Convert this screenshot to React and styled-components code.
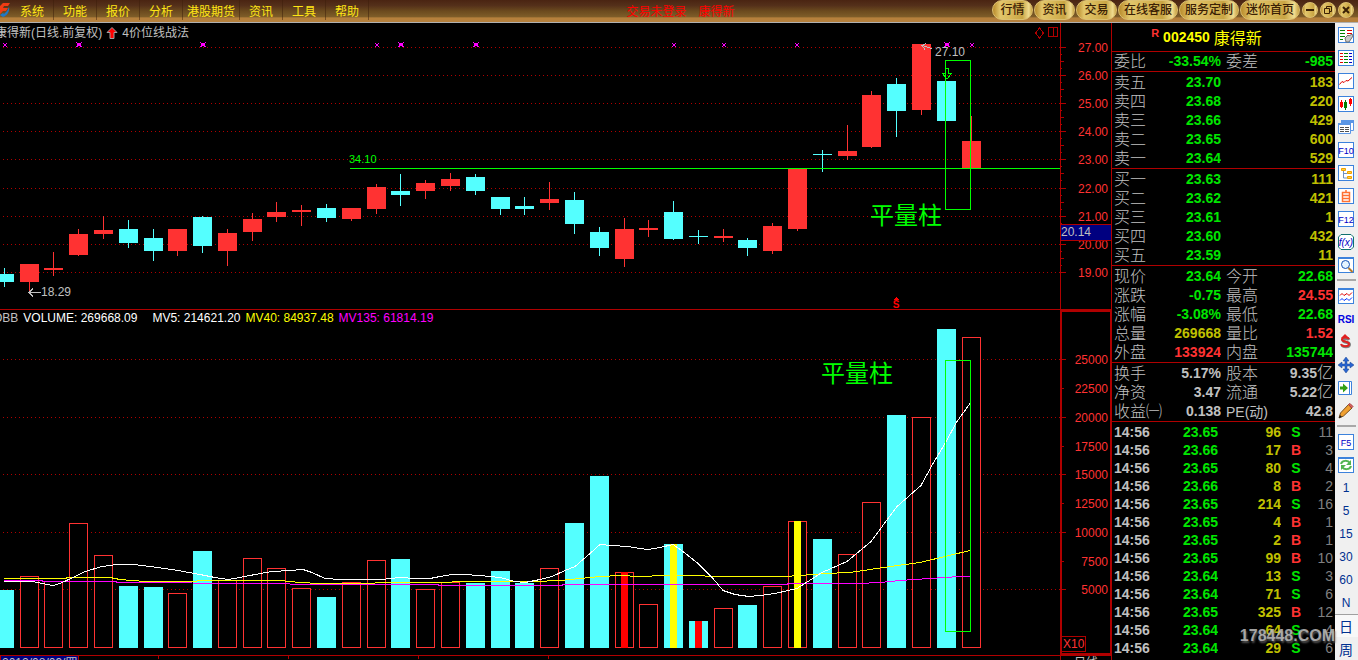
import React from 'react'
import styled, { createGlobalStyle, css } from 'styled-components'

const colors = {
  red: '#ff3232',
  line: '#b00000',
  cyan: '#54ffff',
  green: '#00e600',
  lime: '#00ff00',
  olive: '#c0c000',
  yellow: '#ffff00',
  magenta: '#ff00ff',
  grey: '#c0c0c0',
  dim: '#808080',
  navy: '#000080',
  ink: '#003090',
}

const fontStack = '"Liberation Sans", "Noto Sans CJK SC", sans-serif'

const GlobalStyle = createGlobalStyle`
  * {
    box-sizing: border-box;
  }

  body {
    background: #000;
    font-family: ${fontStack};
    font-size: 12px;
    margin: 0;
  }

  button {
    background: none;
    border: 0;
    cursor: pointer;
    font-family: inherit;
    margin: 0;
    padding: 0;
  }

  svg {
    display: block;
  }
`

/* ---------- data ---------- */

// dir, body top, body bottom, wick top, wick bottom, volume top, stripe
const bars = [
  ['down', 274, 282, 268, 287, 590],
  ['up', 264, 282, 264, 291, 576],
  ['up', 268, 270, 252, 276, 581],
  ['up', 234, 255, 229, 256, 523],
  ['up', 230, 234, 216, 239, 555],
  ['down', 229, 243, 220, 248, 586],
  ['down', 238, 251, 229, 261, 587],
  ['up', 229, 251, 229, 256, 593],
  ['down', 217, 246, 216, 253, 551],
  ['up', 233, 251, 229, 266, 580],
  ['up', 219, 232, 213, 241, 558],
  ['up', 212, 217, 202, 222, 568],
  ['up', 210, 212, 205, 226, 588],
  ['down', 208, 218, 204, 222, 597],
  ['up', 208, 219, 208, 221, 582],
  ['up', 187, 209, 184, 214, 560],
  ['down', 191, 195, 174, 206, 559],
  ['up', 183, 191, 180, 199, 589],
  ['up', 179, 186, 173, 191, 582],
  ['down', 177, 191, 174, 195, 583],
  ['down', 197, 209, 197, 215, 571],
  ['down', 206, 209, 197, 215, 583],
  ['up', 199, 203, 182, 210, 568],
  ['down', 200, 224, 192, 234, 523],
  ['down', 232, 248, 227, 256, 476],
  ['up', 229, 259, 218, 267, 572, '#ff0000'],
  ['up', 228, 230, 220, 237, 604],
  ['down', 212, 239, 201, 240, 544, '#ffff00'],
  ['down', 236, 237, 230, 244, 621, '#ff0000'],
  ['up', 236, 238, 229, 242, 608],
  ['down', 240, 248, 238, 256, 605],
  ['up', 226, 251, 223, 254, 586],
  ['up', 169, 229, 168, 231, 521, '#ffff00'],
  ['down', 154, 155, 150, 172, 539],
  ['up', 151, 156, 125, 160, 554],
  ['up', 95, 147, 91, 148, 502],
  ['down', 84, 111, 78, 137, 415],
  ['up', 44, 110, 44, 115, 417],
  ['down', 81, 121, 81, 121, 329],
  ['up', 141, 168, 116, 168, 337],
].map(([dir, top, bottom, high, low, volume, stripe], i) => ({
  x: Math.floor(24.79 * i - 4.7),
  dir,
  top,
  bottom,
  high,
  low,
  volume,
  stripe,
}))

const BAR = 19
const PRICE_TOP = 23
const PRICE_HEIGHT = 287
const VOLUME_TOP = 310
const VOLUME_HEIGHT = 345
const VOLUME_BASE = 648

const priceTicks = [
  ['27.00', 47],
  ['26.00', 75],
  ['25.00', 103],
  ['24.00', 131],
  ['23.00', 159],
  ['22.00', 188],
  ['21.00', 216],
  ['20.00', 244],
  ['19.00', 272],
]

const volumeTicks = [
  ['25000', 359],
  ['22500', 388],
  ['20000', 417],
  ['17500', 446],
  ['15000', 474],
  ['12500', 503],
  ['10000', 532],
  ['7500', 561],
  ['5000', 589],
]

const signals = [
  [5, 45],
  [79, 45, true],
  [203, 45, true],
  [377, 45],
  [401, 45, true],
  [476, 45, true],
  [674, 45],
  [724, 45],
  [797, 45],
  [947, 45, true],
  [972, 45],
]

const mv5 =
  '4,581 33,581 42,583 53,585 60,583 73,577 85,571 102,566 117,564 134,564 150,566 165,568 178,570 200,574 215,577 228,579 240,577 255,574 272,571 290,570 303,569 312,572 325,578 340,579 381,579 400,577 415,578 430,578 440,576 452,574 463,574 480,575 500,577 515,581 525,582 540,579 552,576 565,570 575,566 590,553 600,544 612,545 628,546 640,548 648,549 660,547 673,544 683,551 698,563 713,578 723,590 735,594 749,596 760,595 775,593 797,588 808,581 822,572 847,561 871,541 897,506 921,485 933,463 945,443 957,421 970,403'
const mv40 =
  '4,578 65,578 68,577 110,577 120,579 145,581 190,581 205,580 280,580 300,582 320,583 365,583 385,582 440,582 465,581 535,581 560,580 580,578 600,576 620,575 640,576 665,575 700,575 710,576 785,576 800,575 825,573 850,572 870,569 890,566 920,562 945,556 970,550'
const mv135 =
  '4,580 40,580 45,581 115,581 118,582 265,583 315,584 437,584 440,585 560,585 565,584 785,584 790,583 858,583 880,582 900,580 930,578 960,576 970,576'

const menus = ['系统', '功能', '报价', '分析', '港股期货', '资讯', '工具', '帮助']
const shortcuts = ['行情', '资讯', '交易', '在线客服', '服务定制', '迷你首页']

const asks = [
  ['卖五', '23.70', '183'],
  ['卖四', '23.68', '220'],
  ['卖三', '23.66', '429'],
  ['卖二', '23.65', '600'],
  ['卖一', '23.64', '529'],
]

const bids = [
  ['买一', '23.63', '111'],
  ['买二', '23.62', '421'],
  ['买三', '23.61', '1'],
  ['买四', '23.60', '432'],
  ['买五', '23.59', '11'],
]

const commission = [['委比', '-33.54%', 'green', '委差', '-985', 'green']]

const quotes = [
  ['现价', '23.64', 'green', '今开', '22.68', 'green'],
  ['涨跌', '-0.75', 'green', '最高', '24.55', 'red'],
  ['涨幅', '-3.08%', 'green', '最低', '22.68', 'green'],
  ['总量', '269668', 'olive', '量比', '1.52', 'red'],
  ['外盘', '133924', 'red', '内盘', '135744', 'green'],
]

const finance = [
  ['换手', '5.17%', 'grey', '股本', '9.35亿', 'grey'],
  ['净资', '3.47', 'grey', '流通', '5.22亿', 'grey'],
  ['收益㈠', '0.138', 'grey', 'PE(动)', '42.8', 'grey'],
]

const trades = [
  ['23.65', 96, 'S', 11],
  ['23.66', 17, 'B', 3],
  ['23.65', 80, 'S', 4],
  ['23.66', 8, 'B', 2],
  ['23.65', 214, 'S', 16],
  ['23.65', 4, 'B', 1],
  ['23.65', 2, 'B', 1],
  ['23.65', 99, 'B', 10],
  ['23.64', 13, 'S', 3],
  ['23.64', 71, 'S', 6],
  ['23.65', 325, 'B', 12],
  ['23.64', 64, 'S', 4],
  ['23.64', 29, 'S', 6],
]

const periods = ['1', '5', '15', '30', '60', 'N', '日', '周']

/* ---------- shell ---------- */

const Page = styled.div`
  display: flex;
  flex-direction: column;
  height: 100vh;
  overflow: hidden;
`

const Workspace = styled.main`
  display: flex;
  flex: 1;
  min-height: 0;
`

/* ---------- top bar ---------- */

const TopBar = styled.header`
  align-items: center;
  background: linear-gradient(#4a2412 0%, #54301a 25%, #6b4a1e 50%, #7d5c28 75%, #b5803c 82%, #b5803c 100%);
  border-bottom: 1px solid #b0b0b0;
  display: flex;
  flex: none;
  height: 23px;
  justify-content: space-between;
  padding: 0 4px 2px 0;
`

const MenuNav = styled.nav`
  align-items: center;
  display: flex;
  height: 20px;
`

const Logo = styled.svg`
  height: 14px;
  margin-right: 1px;
  width: 10px;
`

const MenuButton = styled.button`
  border-right: 1px solid rgba(60, 30, 10, 0.5);
  color: #ffe614;
  font-size: 12px;
  height: 20px;
  width: ${props => (props.$wide ? 57 : 43)}px;
`

const Account = styled.div`
  color: #ff0000;
  display: flex;
  gap: 12px;
`

const Shortcuts = styled.div`
  align-items: center;
  display: flex;
  gap: 1px;
`

const gold = css`
  background: linear-gradient(90deg, #b88a2a 0%, #e2c66c 18%, #d9b95a 45%, #c9a544 75%, #f0dc90 92%, #c79f40 100%);
  border: 1px solid #dcc070;
`

const Pill = styled.button`
  ${gold}
  border-radius: 10px;
  color: #3a2004;
  font-size: 12px;
  font-weight: 500;
  height: 20px;
  line-height: 18px;
  width: ${props => (props.$wide ? 60 : 41)}px;
`

const RoundButton = styled.button`
  ${gold}
  align-items: center;
  border-radius: 50%;
  display: flex;
  height: 16px;
  justify-content: center;
  margin-left: 1px;
  width: 16px;
`

/* ---------- charts ---------- */

const Charts = styled.section`
  display: grid;
  flex: 1;
  grid-template-columns: minmax(0, 1fr) 52px;
  grid-template-rows: auto auto 1fr;
  min-width: 0;
`

const Pane = styled.div`
  overflow: hidden;
  position: relative;
`

const Legend = styled.div`
  align-items: center;
  color: ${colors.grey};
  display: flex;
  gap: ${props => props.$gap}px;
  left: ${props => props.$left}px;
  line-height: 16px;
  position: absolute;
  top: ${props => props.$top}px;
  white-space: nowrap;
`

const LegendItem = styled.span`
  color: ${props => props.$color};
  margin-right: ${props => (props.$spaced ? 10 : 0)}px;
`

const Drawing = styled.svg`
  font-family: ${fontStack};
  font-size: 12px;
  width: 100%;
`

const TimeAxis = styled.div`
  border-top: 1px solid ${colors.line};
  display: flex;
  height: 16px;
`

const DateLabel = styled.span`
  background: ${colors.navy};
  border: solid ${colors.line};
  border-width: 0 1px;
  color: ${colors.grey};
  line-height: 14px;
  padding: 0 1px;
`

const TimeTick = styled.span`
  border-left: 1px solid ${colors.line};
  height: 3px;
  margin-left: ${props => props.$gap}px;
`

const PeriodLabel = styled.div`
  border: solid ${colors.line};
  border-width: 1px 1px 0;
  color: ${colors.grey};
  line-height: 15px;
  text-align: center;
`

const Grid = ({ ticks }) => (
  <g stroke={colors.line} strokeDasharray="1 3">
    {ticks.map(([label, y]) => (
      <line key={label} x1="3" x2="100%" y1={y + 0.5} y2={y + 0.5} />
    ))}
  </g>
)

const Candle = ({ bar }) => (
  <g fill={bar.dir === 'up' ? colors.red : colors.cyan}>
    <rect x={bar.x + 9} y={bar.high} width="1" height={bar.low - bar.high} />
    <rect x={bar.x} y={bar.top} width={BAR} height={bar.bottom - bar.top} />
  </g>
)

const VolumeBar = ({ bar }) => (
  <g>
    {bar.dir === 'up' ? (
      <rect
        x={bar.x + 0.5}
        y={bar.volume + 0.5}
        width={BAR - 1}
        height={VOLUME_BASE - bar.volume - 1}
        fill="#000"
        stroke={colors.red}
      />
    ) : (
      <rect x={bar.x} y={bar.volume} width={BAR} height={VOLUME_BASE - bar.volume} fill={colors.cyan} />
    )}
    {bar.stripe && (
      <rect x={bar.x + 6} y={bar.volume} width="7" height={VOLUME_BASE - bar.volume} fill={bar.stripe} />
    )}
  </g>
)

const Signal = ({ x, y, strong }) => (
  <g fill={colors.magenta}>
    <path
      d={`M${x - 2} ${y - 2}h1v1h-1zM${x + 1} ${y - 2}h1v1h-1zM${x - 1} ${y - 1}h2v2h-2zM${x - 2} ${y + 1}h1v1h-1zM${x + 1} ${y + 1}h1v1h-1z`}
    />
    {strong && <path d={`M${x - 2} ${y - 2}h4v3h-4zM${x - 3} ${y - 3}h1v1h-1zM${x + 2} ${y - 3}h1v1h-1zM${x - 3} ${y + 1}h1v1h-1zM${x + 2} ${y + 1}h1v1h-1z`} />}
  </g>
)

const PriceChart = () => (
  <Drawing height={PRICE_HEIGHT} shapeRendering="crispEdges">
    <g transform={`translate(0 ${-PRICE_TOP})`}>
      <Grid ticks={priceTicks} />
      {bars.map(bar => (
        <Candle key={bar.x} bar={bar} />
      ))}
      {signals.map(([x, y, strong]) => (
        <Signal key={x} x={x} y={y} strong={strong} />
      ))}

      <line x1="350" x2="100%" y1="168.5" y2="168.5" stroke={colors.lime} />
      <text x="349" y="163" fill={colors.lime} fontSize="11">
        34.10
      </text>
      <rect x="945.5" y="60.5" width="25" height="149" fill="none" stroke={colors.lime} />
      <path d="M945.5 68.5h3v5h3l-4.500 5.500l-4.500-5.500h3z" fill="none" stroke={colors.lime} />
      <text x="870" y="224" fill={colors.lime} fontSize="24">
        平量柱
      </text>

      <g stroke={colors.grey} fill="none">
        <path d="M932 48.500L922 45.500M926 43.500L922 45.500L925 49.500" />
        <path d="M29 292.500h12M33 288.500l-4 4l4 4" />
      </g>
      <text x="935" y="56" fill={colors.grey}>
        27.10
      </text>
      <text x="41" y="296" fill={colors.grey}>
        18.29
      </text>

      <path d="M896 297l3 3h-6z" fill="#ff0000" />
      <text x="896" y="308" fill="#ff0000" fontSize="10" fontWeight="700" textAnchor="middle">
        S
      </text>
      <path
        d="M1039.500 28l4 5l-4 5l-4-5zM1048.500 27.500h9v9h-9zM1053.500 27.500v9"
        fill="none"
        stroke={colors.line}
      />
      <rect x="0" y="309" width="100%" height="1" fill={colors.line} />
    </g>
  </Drawing>
)

const PriceAxis = () => (
  <Drawing height={PRICE_HEIGHT} shapeRendering="crispEdges">
    <g transform={`translate(0 ${-PRICE_TOP})`}>
      <path d="M0.500 23V310M51.500 23V310M0 309.500H52" stroke={colors.line} />
      {priceTicks.map(([label, y], i) => (
        <g key={label}>
          <path
            d={`M1 ${y + 0.5}h5${i < 8 ? `M1 ${y + 14.5}h3M1 ${y + 7.5}h1M1 ${y + 21.5}h1` : ''}`}
            stroke={colors.line}
          />
          <text x="48" y={y + 5} fill={colors.red} textAnchor="end">
            {label}
          </text>
        </g>
      ))}
      <rect x="0.5" y="224.5" width="51" height="16" fill={colors.navy} stroke={colors.line} />
      <text x="1" y="236" fill={colors.grey}>
        20.14
      </text>
    </g>
  </Drawing>
)

const VolumeChart = () => (
  <Drawing height={VOLUME_HEIGHT} shapeRendering="crispEdges">
    <g transform={`translate(0 ${-VOLUME_TOP})`}>
      <Grid ticks={volumeTicks.filter((tick, i) => i % 2 === 0)} />
      {bars.map(bar => (
        <VolumeBar key={bar.x} bar={bar} />
      ))}
      <g fill="none" transform="translate(0 0.5)">
        <polyline points={mv40} stroke={colors.yellow} />
        <polyline points={mv135} stroke={colors.magenta} />
        <polyline points={mv5} stroke="#fff" />
      </g>
      <rect x="945.5" y="360.5" width="25" height="271" fill="none" stroke={colors.lime} />
      <text x="821" y="382" fill={colors.lime} fontSize="24">
        平量柱
      </text>
    </g>
  </Drawing>
)

const VolumeAxis = () => (
  <Drawing height={VOLUME_HEIGHT} shapeRendering="crispEdges">
    <g transform={`translate(0 ${-VOLUME_TOP})`}>
      <rect x="1" y="311" width="50" height="343" fill="none" stroke={colors.line} strokeWidth="2" />
      {volumeTicks.map(([label, y], i) => (
        <g key={label}>
          <path d={`M1 ${y + 0.5}h${i % 2 ? 3 : 5}`} stroke={colors.line} />
          <text x="48" y={y + 5} fill={colors.red} textAnchor="end">
            {label}
          </text>
        </g>
      ))}
      <rect x="1.5" y="636.5" width="24" height="15" fill="none" stroke={colors.line} />
      <text x="3" y="648" fill={colors.red}>
        X10
      </text>
    </g>
  </Drawing>
)

/* ---------- quote panel ---------- */

const Panel = styled.aside`
  background: #000;
  color: ${colors.grey};
  flex: none;
  position: relative;
  width: 223px;
`

const Section = styled.div`
  border-bottom: 1px solid ${colors.line};
  padding: ${props => (props.$tight ? 0 : 1)}px 2px 0;
`

const StockTitle = styled.h1`
  align-items: center;
  border-bottom: 1px solid ${colors.line};
  color: ${colors.yellow};
  display: flex;
  font-size: 14px;
  gap: 4px;
  height: 29px;
  justify-content: center;
  margin: 0;
  padding-right: 34px;
`

const StockName = styled.span`
  font-size: 16px;
  font-weight: 400;
`

const MarginFlag = styled.sup`
  align-self: flex-start;
  color: ${colors.red};
  font-size: 11px;
  line-height: 20px;
`

const Table = styled.table`
  border-collapse: collapse;
  table-layout: fixed;
  width: 100%;

  th,
  td {
    height: ${props => props.$row}px;
    line-height: ${props => props.$row}px;
    overflow: hidden;
    padding: 0;
    white-space: nowrap;
  }
`

const Label = styled.th`
  font-size: 16px;
  font-weight: 300;
  padding-left: ${props => (props.$second ? 5 : 0)}px !important;
  text-align: left;
  width: ${props => (props.$second ? 53 : 48)}px;
`

const Value = styled.td`
  color: ${props => colors[props.$tone]};
  font-size: 14px;
  font-weight: ${props => (props.$light ? 400 : 700)};
  text-align: ${props => props.$align || 'right'};
  width: ${props => (props.$width ? props.$width + 'px' : 'auto')};
`

const Unit = styled.span`
  font-size: 16px;
  font-weight: 300;
  line-height: 1;
`

const Latin = styled.span`
  font-size: 14px;
  font-weight: 400;
  line-height: 1;
`

const TradeList = styled.div`
  padding: 1px 2px 0;
`

const Watermark = styled.div`
  bottom: 12px;
  color: rgba(190, 190, 190, 0.85);
  font-family: 'Liberation Sans Narrow', 'Liberation Sans', sans-serif;
  font-size: 16px;
  font-weight: 700;
  line-height: 24px;
  position: absolute;
  right: 0;
  text-shadow: 1px 2px 2px #555;
`

const OrderRows = ({ rows }) => (
  <Table $row={19}>
    <tbody>
      {rows.map(([label, price, amount]) => (
        <tr key={label}>
          <Label scope="row">{label}</Label>
          <Value $tone="green" $width={59}>
            {price}
          </Value>
          <Value $tone="olive">{amount}</Value>
        </tr>
      ))}
    </tbody>
  </Table>
)

const PairRows = ({ rows }) => (
  <Table $row={19}>
    <tbody>
      {rows.map(([label, value, tone, label2, value2, tone2]) => (
        <tr key={label}>
          <Label scope="row">{label}</Label>
          <Value $tone={tone} $width={59}>
            {value}
          </Value>
          <Label scope="row" $second>
            {label2.startsWith('PE') ? <Latin>{label2}</Latin> : label2}
          </Label>
          <Value $tone={tone2}>
            {value2.replace('亿', '')}
            {value2.endsWith('亿') && <Unit>亿</Unit>}
          </Value>
        </tr>
      ))}
    </tbody>
  </Table>
)

const QuotePanel = () => (
  <Panel>
    <StockTitle>
      <MarginFlag>R</MarginFlag>
      002450
      <StockName>康得新</StockName>
    </StockTitle>
    <Section $tight>
      <PairRows rows={commission} />
    </Section>
    <Section>
      <OrderRows rows={asks} />
    </Section>
    <Section>
      <OrderRows rows={bids} />
    </Section>
    <Section>
      <PairRows rows={quotes} />
    </Section>
    <Section>
      <PairRows rows={finance} />
    </Section>
    <TradeList>
      <Table $row={18}>
        <tbody>
          {trades.map(([price, amount, side, count], i) => (
            <tr key={i}>
              <Value $tone="grey" $align="left" $width={48}>
                14:56
              </Value>
              <Value $tone="green" $width={56}>
                {price}
              </Value>
              <Value $tone="olive" $width={63}>
                {amount}
              </Value>
              <Value $tone={side === 'S' ? 'green' : 'red'} $align="center" $width={30}>
                {side}
              </Value>
              <Value $tone="dim" $light>
                {count}
              </Value>
            </tr>
          ))}
        </tbody>
      </Table>
    </TradeList>
    <Watermark>178448.COM</Watermark>
  </Panel>
)

/* ---------- tool rail ---------- */

const Rail = styled.nav`
  background: #f0f0f0;
  display: flex;
  flex: none;
  flex-direction: column;
  width: 23px;
`

const RailButton = styled.button`
  align-items: center;
  background: ${props => (props.$active ? '#f8f8f8' : 'none')};
  border-top: ${props => (props.$active ? '1px solid #a0a0a0' : '0')};
  color: ${colors.ink};
  display: flex;
  flex: none;
  font-size: ${props => (props.$cjk ? 14 : 12)}px;
  height: 23px;
  justify-content: center;
  padding-right: 1px;
`

const Divider = styled.hr`
  border: 0;
  border-top: 2px solid #a8a8a8;
  flex: none;
  margin: 3px 2px;
  width: 19px;
`

const IconSvg = styled.svg`
  font-family: ${fontStack};
  height: 16px;
  overflow: visible;
  width: 16px;
`

const Frame = ({ stroke = '#3c82dc' }) => (
  <rect x="0.5" y="0.5" width="15" height="15" fill="#fff" stroke={stroke} />
)

const FrameText = ({ children }) => (
  <>
    <Frame />
    <text x="8" y="12" fill="#0000c8" fontSize="9" textAnchor="middle">
      {children}
    </text>
  </>
)

const icons = [
  [
    '报价列表',
    <>
      <Frame />
      <path d="M2 3.500h5M2 6.500h5M2 9.500h5M2 12.500h3" stroke="#008000" />
      <path d="M9 3.500h5M9 6.500h5" stroke="#e00000" />
      <path d="M7 11l3-3l1 1l3-2l1 2l-4 6h-3z" fill="#c8c8c8" stroke="#707070" />
    </>,
  ],
  [
    '分类报价',
    <>
      <Frame />
      <path d="M2 3.500h3M2 6.500h3M2 9.500h3M2 12.500h3" stroke="#e00000" />
      <path d="M6 3.500h4M6 6.500h4M6 9.500h4M6 12.500h4" stroke="#008000" />
      <path d="M11 3.500h3M11 6.500h3M11 9.500h3M11 12.500h3" stroke="#0000c8" />
    </>,
  ],
  [
    '分时走势',
    <>
      <Frame />
      <path d="M1.500 11.500L4 8.500L6 9.500L8 7.500L10 8L14 4.500" fill="none" stroke="#e00000" />
    </>,
  ],
  [
    '技术分析',
    <>
      <Frame />
      <path d="M3.500 4v8M12.500 2v8" stroke="#ff0000" />
      <path d="M7.500 4v10" stroke="#008000" />
      <path d="M2 6h3v5h-3zM11 3h3v5h-3z" fill="#ff0000" />
      <path d="M6 6h3v6h-3z" fill="#008000" />
    </>,
  ],
  [
    '多窗口',
    <>
      <path d="M3.500 1.500h12v10h-12z" fill="#fff" stroke="#5a96e6" />
      <path d="M3 1h13v3h-13z" fill="#5a96e6" />
      <path d="M0.500 4.500h12v10h-12z" fill="#fff" stroke="#5a96e6" />
      <path d="M0 4h13v2h-13z" fill="#5a96e6" />
      <path d="M2 8.500h4M7 8.500h4M2 10.500h4M7 10.500h4M2 12.500h4M7 12.500h4" stroke="#505050" />
    </>,
  ],
  ['基本资料', <FrameText>F10</FrameText>],
  [
    '板块树',
    <>
      <Frame />
      <path d="M5.500 6v7h4M5.500 8.500h4" fill="none" stroke="#7090c0" />
      <path d="M3.500 3.500h4v2h-4zM9.500 6.500h4v2h-4zM9.500 11.500h4v2h-4z" fill="#ffd040" stroke="#f0a000" />
    </>,
  ],
  [
    '自选股',
    <>
      <Frame />
      <path d="M4.500 4.500h7v9h-7zM4.500 7.500h7M4.500 10.500h7M8 2v2" fill="none" stroke="#ff7032" strokeWidth="1.500" />
    </>,
  ],
  ['交易委托', <FrameText>F12</FrameText>],
  [
    '公式',
    <>
      <path d="M3 0.500h10l2.500 2.500v10l-2.500 2.500h-10l-2.500-2.500v-10z" fill="#fff" stroke="#107070" />
      <text x="8" y="12" fill="#0000c8" fontSize="10" fontStyle="italic" textAnchor="middle">
        f(x)
      </text>
    </>,
  ],
  [
    '搜索',
    <>
      <Frame />
      <path d="M0 0h16v2h-16z" fill="#3c82dc" />
      <circle cx="7.500" cy="7.500" r="4" fill="#e6f4ff" stroke="#1450b4" />
      <path d="M10.500 11l4 4" stroke="#b47828" strokeWidth="2" />
    </>,
  ],
  null,
  [
    '指标',
    <>
      <Frame />
      <path d="M0 0h16v2h-16z" fill="#3c82dc" />
      <path d="M2 7.500l2-2l2 2l3-2l2 2l3-3" fill="none" stroke="#e00000" />
      <path d="M2 12.500l2-2l2 2l3-2l2 2l3-3" fill="none" stroke="#0032ff" />
    </>,
  ],
  [
    'RSI',
    <text x="8" y="12" fill="#0000e0" fontSize="10" fontWeight="700" textAnchor="middle">
      RSI
    </text>,
  ],
  [
    '资金',
    <>
      <path d="M7 0l4 4h-8z" fill="#e02020" />
      <path d="M11 6c-1-2-6-2-6 0.500c0 2.500 6.500 1 6.500 4c0 3-6.500 3-7.500 0.500" fill="none" stroke="#808080" strokeWidth="3" />
      <path d="M11 5c-1-2-7-2-7 0.500c0 2.500 7 1.500 7 4.500c0 3-7 3-8 0" fill="none" stroke="#e02020" strokeWidth="2" />
    </>,
  ],
  [
    '移动',
    <path
      d="M8 0l3 4h-2v3h3v-2l4 3l-4 3v-2h-3v3h2l-3 4l-3-4h2v-3h-3v2l-4-3l4-3v2h3v-3h-2z"
      fill="#2864d2"
      stroke="#1a468c"
      strokeWidth="0.500"
    />,
  ],
  [
    '右移',
    <>
      <path d="M0.500 1.500h13v13h-13z" fill="#fff" stroke="#3c82dc" />
      <path d="M11.500 2v12" stroke="#3c82dc" />
      <path d="M2 6.500h3v-3l5 4.500l-5 4.500v-3h-3z" fill="#32a014" />
    </>,
  ],
  [
    '画线',
    <>
      <path d="M1 15l1.500-5l8-8.500l3.500 3.500l-8.500 8z" fill="#f0a030" stroke="#785020" />
      <path d="M10.500 1.500l1.500-1l3 3l-1.500 1.500z" fill="#e06464" stroke="#a04040" />
      <path d="M1 15l1-3l2 2z" fill="#202020" />
    </>,
  ],
  null,
  ['刷新周期', <FrameText>F5</FrameText>],
  [
    '刷新',
    <>
      <Frame />
      <path d="M0 0h16v2h-16z" fill="#3c82dc" />
      <path d="M3 7c1-4 7-4 9-1M13 9c-1 4-7 4-9 1" fill="none" stroke="#50b450" strokeWidth="2" />
      <path d="M13 3v5h-5zM3 13v-5h5z" fill="#50b450" />
    </>,
  ],
]

const ToolRail = () => (
  <Rail aria-label="工具栏">
    {icons.map((icon, i) =>
      icon ? (
        <RailButton key={i} type="button" aria-label={icon[0]}>
          <IconSvg viewBox="0 0 16 16">{icon[1]}</IconSvg>
        </RailButton>
      ) : (
        <Divider key={i} />
      )
    )}
    {periods.map(period => (
      <RailButton key={period} type="button" $active={period === '日'} $cjk={period > 'a'}>
        {period}
      </RailButton>
    ))}
  </Rail>
)

/* ---------- app ---------- */

const App = () => (
  <Page>
    <GlobalStyle />
    <TopBar>
      <MenuNav>
        <Logo viewBox="0 0 10 14">
          <path d="M0 3L3 0h7l-2 3h-4l-1 2h5l-2 3h-3l-3 3z" fill="#f03c14" />
          <path d="M0 12l3-2l1 1l3-3l2-4c1 4-2 9-6 10z" fill="#1e78c8" />
        </Logo>
        {menus.map(menu => (
          <MenuButton key={menu} type="button" $wide={menu.length > 2}>
            {menu}
          </MenuButton>
        ))}
      </MenuNav>
      <Account>
        <span>交易未登录</span>
        <span>康得新</span>
      </Account>
      <Shortcuts>
        {shortcuts.map(name => (
          <Pill key={name} type="button" $wide={name.length > 2}>
            {name}
          </Pill>
        ))}
        <RoundButton type="button" aria-label="最小化">
          <svg width="10" height="10">
            <path d="M1 5h8" stroke="#3a2004" strokeWidth="2" />
          </svg>
        </RoundButton>
        <RoundButton type="button" aria-label="还原">
          <svg width="10" height="10">
            <path d="M3.500 3V1.500h5v5H7M1.500 3.500h5v5h-5z" fill="none" stroke="#3a2004" />
          </svg>
        </RoundButton>
        <RoundButton type="button" aria-label="关闭">
          <svg width="10" height="10">
            <path d="M2 2l6 6M8 2l-6 6" stroke="#3a2004" strokeWidth="2" />
          </svg>
        </RoundButton>
      </Shortcuts>
    </TopBar>
    <Workspace>
      <Charts>
        <Pane>
          <Legend $left={-5} $top={2} $gap={4}>
            <span>康得新(日线.前复权)</span>
            <svg width="12" height="12">
              <path d="M6 0.500l5 5h-3v6h-4v-6h-3z" fill="#ff0000" stroke="#a0a0a0" />
            </svg>
            <span>4价位线战法</span>
          </Legend>
          <PriceChart />
        </Pane>
        <PriceAxis />
        <Pane>
          <Legend $left={-7} $top={0} $gap={5}>
            <LegendItem $color={colors.grey}>OBB</LegendItem>
            <LegendItem $color="#fff" $spaced>
              VOLUME: 269668.09
            </LegendItem>
            <LegendItem $color="#fff">MV5: 214621.20</LegendItem>
            <LegendItem $color={colors.yellow}>MV40: 84937.48</LegendItem>
            <LegendItem $color={colors.magenta}>MV135: 61814.19</LegendItem>
          </Legend>
          <VolumeChart />
        </Pane>
        <VolumeAxis />
        <TimeAxis>
          <DateLabel>2012/08/09/四</DateLabel>
          <TimeTick $gap={79} />
          <TimeTick $gap={129} />
          <TimeTick $gap={129} />
          <TimeTick $gap={129} />
        </TimeAxis>
        <PeriodLabel>日线</PeriodLabel>
      </Charts>
      <QuotePanel />
      <ToolRail />
    </Workspace>
  </Page>
)

export default App
